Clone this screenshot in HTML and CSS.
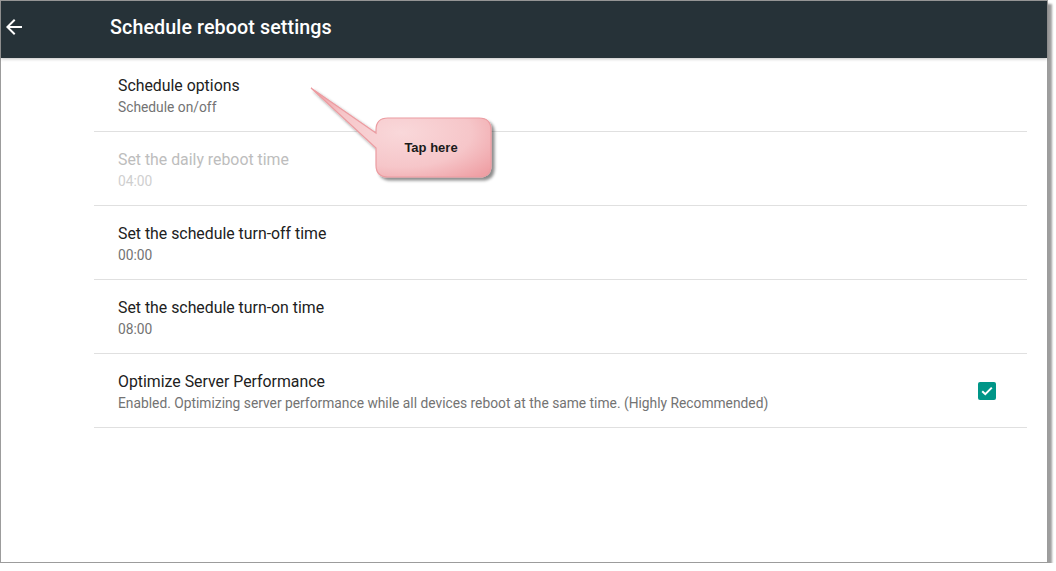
FILE: index.html
```html
<!DOCTYPE html>
<html lang="en">
<head>
<meta charset="utf-8">
<title>Schedule reboot settings</title>
<link rel="stylesheet" href="styles.css">
</head>
<body>
<div class="frame">
  <header class="appbar">
    <span class="back">
      <svg width="24" height="24" viewBox="0 0 24 24"><path fill="#fff" d="M20 11H7.83l5.59-5.59L12 4l-8 8 8 8 1.41-1.41L7.83 13H20v-2z"/></svg>
    </span>
    <h1 class="appbar-title">Schedule reboot settings</h1>
  </header>

  <ul class="prefs">
    <li class="pref">
      <div class="pref-text">
        <div class="pref-title">Schedule options</div>
        <div class="pref-summary">Schedule on/off</div>
      </div>
    </li>
    <li class="pref pref-disabled">
      <div class="pref-text">
        <div class="pref-title">Set the daily reboot time</div>
        <div class="pref-summary">04:00</div>
      </div>
    </li>
    <li class="pref">
      <div class="pref-text">
        <div class="pref-title">Set the schedule turn-off time</div>
        <div class="pref-summary">00:00</div>
      </div>
    </li>
    <li class="pref">
      <div class="pref-text">
        <div class="pref-title">Set the schedule turn-on time</div>
        <div class="pref-summary">08:00</div>
      </div>
    </li>
    <li class="pref">
      <div class="pref-text">
        <div class="pref-title">Optimize Server Performance</div>
        <div class="pref-summary">Enabled. Optimizing server performance while all devices reboot at the same time. (Highly Recommended)</div>
      </div>
      <span class="checkbox">
        <svg width="18" height="18" viewBox="0 0 18 18"><path d="M4.2 9.2l3.1 3 6.5-6.6" fill="none" stroke="#fff" stroke-width="2"/></svg>
      </span>
    </li>
  </ul>

  <!-- annotation bubble pointing at the first preference -->
  <div class="callout">
    <svg width="200" height="110" viewBox="0 0 200 110">
      <defs>
        <radialGradient id="bubbleFill" cx="50%" cy="50%" r="65%">
          <stop offset="0" stop-color="#f9d8da"/>
          <stop offset="0.6" stop-color="#f6c6c9"/>
          <stop offset="1" stop-color="#efa0a5"/>
        </radialGradient>
        <filter id="bubbleShadow" x="-10%" y="-10%" width="130%" height="140%">
          <feDropShadow dx="3" dy="3" stdDeviation="1.6" flood-color="#000" flood-opacity="0.45"/>
        </filter>
      </defs>
      <path filter="url(#bubbleShadow)" fill="url(#bubbleFill)" stroke="#ec9ca1" stroke-width="1.2"
        d="M12 8 L77 53 L77 50 Q77 38 89 38 L180 38 Q192 38 192 50 L192 85 Q192 97 180 97 L89 97 Q77 97 77 85 L77 68 Z"/>
    </svg>
    <span class="callout-text">Tap here</span>
  </div>
</div>
</body>
</html>
```

FILE: styles.css
```css
* { box-sizing: border-box; }

html, body {
  margin: 0;
  padding: 0;
  background: #ffffff;
}

.frame {
  position: relative;
  width: 1048px;
  height: 563px;
  border: 1px solid #9c9c9c;
  background: #ffffff;
  box-shadow: 4px 4px 2px rgba(0, 0, 0, 0.38);
  font-family: Roboto, "Noto Sans", sans-serif;
  overflow: visible;
}

.appbar {
  display: flex;
  align-items: center;
  height: 57px;
  background: #263238;
  color: #ffffff;
  box-shadow: 0 1px 3px rgba(0, 0, 0, 0.25);
  position: relative;
  z-index: 1;
}

.back {
  display: flex;
  width: 24px;
  height: 24px;
  margin-left: 1px;
  margin-top: -5px;
}

.appbar-title {
  margin: -5px 0 0 84px;
  font-size: 19.7px;
  font-weight: 500;
  letter-spacing: 0.1px;
}

.prefs {
  list-style: none;
  margin: 0 20px 0 93px;
  padding: 0;
}

.pref {
  display: flex;
  align-items: center;
  padding: 17px 31px 14px 24px;
  border-bottom: 1px solid #e0e0e0;
}

.pref-text {
  flex: 1;
}

.pref-title {
  font-size: 15.85px;
  line-height: 22px;
  color: #212121;
}

.pref-summary {
  font-size: 13.8px;
  line-height: 20px;
  color: #737373;
}

.pref-disabled .pref-title {
  color: #bdbdbd;
}

.pref-disabled .pref-summary {
  color: #cfcfcf;
}

.checkbox {
  display: flex;
  width: 18px;
  height: 18px;
  margin-top: -2px;
  border-radius: 2px;
  background: #009688;
}

.callout {
  position: absolute;
  left: 298px;
  top: 79px;
  width: 200px;
  height: 110px;
}

.callout svg {
  display: block;
}

.callout-text {
  position: absolute;
  left: 75px;
  top: 38px;
  width: 114px;
  height: 58px;
  display: flex;
  align-items: center;
  justify-content: center;
  font-family: "Liberation Sans", Arial, sans-serif;
  font-weight: bold;
  font-size: 13px;
  color: #1a1a1a;
}
```
